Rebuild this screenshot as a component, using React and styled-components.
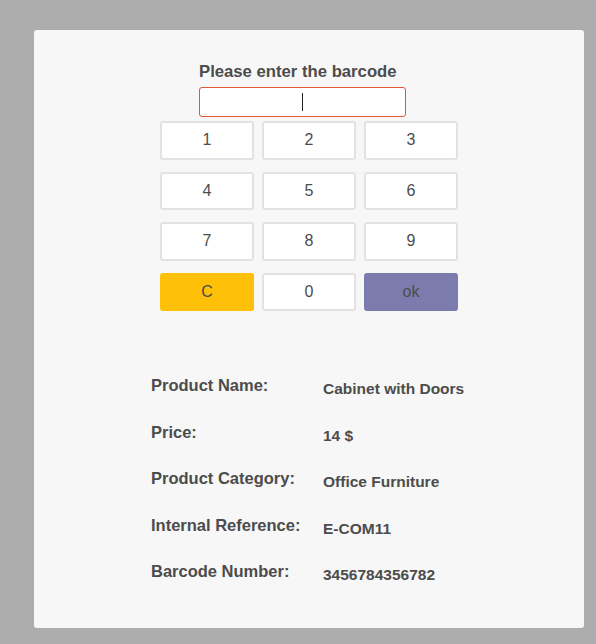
import styled, { createGlobalStyle } from "styled-components";

const GlobalStyle = createGlobalStyle`
  html, body {
    margin: 0;
    background-color: #adadad;
  }
  body {
    padding: 30px 12px 16px 34px;
    font-family: "Liberation Sans", Arial, sans-serif;
    color: #4c4c4c;
  }
`;

const keys = [
  { label: "1" },
  { label: "2" },
  { label: "3" },
  { label: "4" },
  { label: "5" },
  { label: "6" },
  { label: "7" },
  { label: "8" },
  { label: "9" },
  { label: "C", variant: "clear" },
  { label: "0" },
  { label: "ok", variant: "ok" },
];

const details = [
  ["Product Name:", "Cabinet with Doors"],
  ["Price:", "14 $"],
  ["Product Category:", "Office Furniture"],
  ["Internal Reference:", "E-COM11"],
  ["Barcode Number:", "3456784356782"],
];

export default function App() {
  return (
    <>
      <GlobalStyle />
      <Card>
        <BarcodeBlock>
          <Title>Please enter the barcode</Title>
          <InputWrap>
            <BarcodeInput type="text" />
            <Caret />
          </InputWrap>
        </BarcodeBlock>
        <Keypad>
          {keys.map((key) => (
            <Key key={key.label} $variant={key.variant}>
              {key.label}
            </Key>
          ))}
        </Keypad>
        <Details>
          {details.map(([label, value]) => (
            <DetailRow key={label}>
              <DetailLabel>{label}</DetailLabel>
              <DetailValue>{value}</DetailValue>
            </DetailRow>
          ))}
        </Details>
      </Card>
    </>
  );
}

const Card = styled.main`
  width: 550px;
  height: 598px;
  box-sizing: border-box;
  background-color: #f7f7f7;
  border-radius: 3px;
  padding-top: 33px;
  display: flex;
  flex-direction: column;
  align-items: center;
`;

const BarcodeBlock = styled.div`
  width: 207px;
  margin-right: 13px;
  display: flex;
  flex-direction: column;
  gap: 6px;
`;

const Title = styled.h1`
  margin: 0;
  font-size: 16.7px;
  line-height: 18px;
  font-weight: 700;
  white-space: nowrap;
`;

const InputWrap = styled.div`
  position: relative;
`;

const BarcodeInput = styled.input`
  display: block;
  width: 100%;
  height: 30px;
  box-sizing: border-box;
  border: 1px solid #e4572e;
  border-radius: 3px;
  background-color: #fff;
  outline: none;
  text-align: center;
  font: inherit;
`;

const Caret = styled.span`
  position: absolute;
  left: 103px;
  top: 6px;
  width: 1px;
  height: 18px;
  background-color: #222;
`;

const Keypad = styled.div`
  margin-top: 4px;
  display: grid;
  grid-template-columns: repeat(3, 93.5px);
  grid-auto-rows: 38.5px;
  column-gap: 8.5px;
  row-gap: 12px;
`;

const keyColors = {
  clear: { bg: "#ffc107", border: "#ffc107" },
  ok: { bg: "#7b7bad", border: "#7b7bad" },
};

const Key = styled.button`
  box-sizing: border-box;
  border: 2px solid ${({ $variant }) => keyColors[$variant]?.border || "#e2e2e4"};
  border-radius: 3px;
  background-color: ${({ $variant }) => keyColors[$variant]?.bg || "#fff"};
  color: #4c4c4c;
  font-family: "Liberation Sans", Arial, sans-serif;
  font-size: 16px;
  padding: 0;
  cursor: pointer;
`;

const Details = styled.div`
  margin-top: 65px;
  width: 316px;
  display: flex;
  flex-direction: column;
`;

const DetailRow = styled.div`
  display: grid;
  grid-template-columns: 172px 1fr;
  height: 46.5px;
`;

const DetailLabel = styled.span`
  font-size: 16.5px;
  line-height: 19px;
  font-weight: 700;
`;

const DetailValue = styled.span`
  padding-top: 3px;
  font-size: 15.5px;
  line-height: 19px;
  font-weight: 700;
`;
